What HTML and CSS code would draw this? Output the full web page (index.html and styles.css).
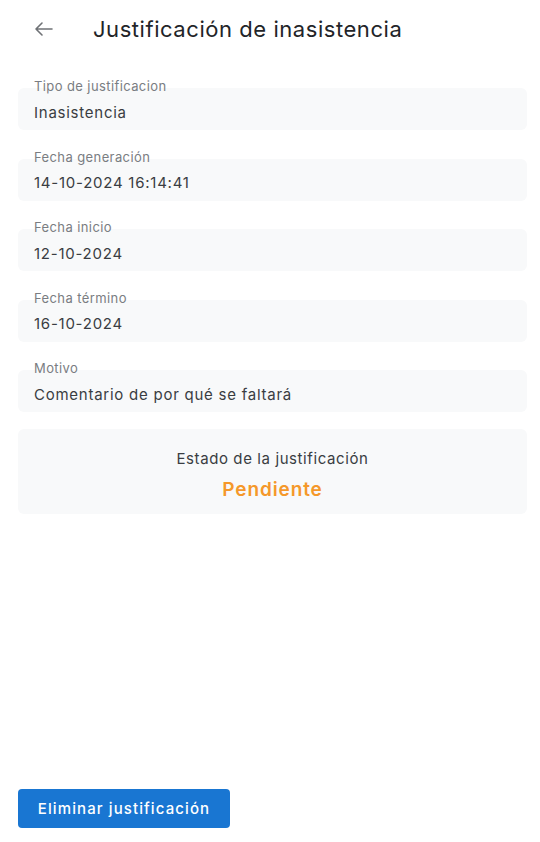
FILE: index.html
```html
<!DOCTYPE html>
<html lang="es">
<head>
<meta charset="utf-8">
<title>Justificación de inasistencia</title>
<link rel="stylesheet" href="styles.css">
</head>
<body>
<div class="page">
  <header class="header">
    <button class="back" aria-label="Volver">
      <svg width="20" height="20" viewBox="0 0 20 20"><path d="M18 10H2M8 4L2 10L8 16" fill="none" stroke="#6f7276" stroke-width="1.6" stroke-linecap="round" stroke-linejoin="round"/></svg>
    </button>
    <h1 class="title">Justificación de inasistencia</h1>
  </header>
  <main class="content">
    <div class="field">
      <span class="label">Tipo de justificacion</span>
      <div class="box">Inasistencia</div>
    </div>
    <div class="field">
      <span class="label">Fecha generación</span>
      <div class="box">14-10-2024 16:14:41</div>
    </div>
    <div class="field">
      <span class="label">Fecha inicio</span>
      <div class="box">12-10-2024</div>
    </div>
    <div class="field">
      <span class="label">Fecha término</span>
      <div class="box">16-10-2024</div>
    </div>
    <div class="field">
      <span class="label">Motivo</span>
      <div class="box">Comentario de por qué se faltará</div>
    </div>
    <div class="status">
      <div class="status-title">Estado de la justificación</div>
      <div class="status-value">Pendiente</div>
    </div>
  </main>
  <div class="actions">
    <button class="btn-primary">Eliminar justificación</button>
  </div>
</div>
</body>
</html>
```
FILE: styles.css
```css
* { box-sizing: border-box; }
html, body { margin: 0; padding: 0; background: #fff; }
body {
  font-family: "Inter", "Open Sans", sans-serif;
  color: #3a3d42;
}
.page {
  min-height: 100vh;
  display: flex;
  flex-direction: column;
  padding: 0 13px 14px 18px;
}
.header {
  height: 58px;
  display: flex;
  align-items: center;
}
.back {
  width: 36px;
  height: 36px;
  margin-left: 8px;
  border: none;
  background: transparent;
  padding: 0;
  display: flex;
  align-items: center;
  justify-content: center;
}
.title {
  margin: 0 0 0 31px;
  font-size: 22px;
  font-weight: 400;
  color: #222428;
  letter-spacing: 0.55px;
}
.content {
  padding-top: 20px;
  display: flex;
  flex-direction: column;
  gap: 18.5px;
}
.field { display: block; }
.label {
  display: block;
  font-size: 13px;
  line-height: 16px;
  color: #7a7d82;
  padding-left: 16px;
  margin-bottom: -6px;
  letter-spacing: 0.4px;
}
.box {
  height: 42px;
  background: #f8f9fa;
  border-radius: 6px;
  padding: 6px 16px 0;
  display: flex;
  align-items: center;
  font-size: 15px;
  color: #3a3d42;
  letter-spacing: 0.75px;
}
.status {
  margin-top: -1.5px;
  height: 85px;
  background: #f8f9fa;
  border-radius: 6px;
  display: flex;
  flex-direction: column;
  align-items: center;
  justify-content: center;
  gap: 10px;
  padding-top: 6px;
}
.status-title { font-size: 15px; color: #3a3d42; letter-spacing: 0.6px; }
.status-value { font-size: 19px; font-weight: 600; color: #f5982a; letter-spacing: 0.9px; }
.actions { margin-top: auto; }
.btn-primary {
  height: 39px;
  width: 212px;
  border: none;
  border-radius: 4px;
  background: #1976d2;
  color: #fff;
  font-family: inherit;
  font-size: 15px;
  font-weight: 500;
  letter-spacing: 1.1px;
}
```
